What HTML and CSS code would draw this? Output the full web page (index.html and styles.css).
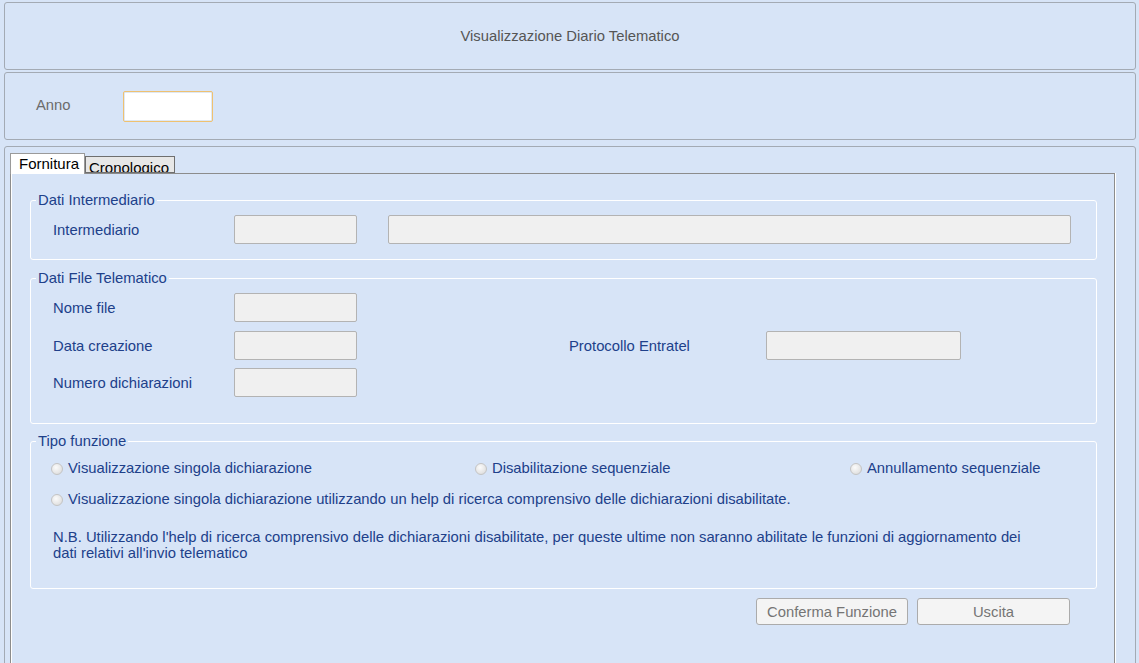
FILE: index.html
```html
<!DOCTYPE html>
<html lang="it">
<head>
<meta charset="utf-8">
<title>Visualizzazione Diario Telematico</title>
<link rel="stylesheet" href="styles.css">
</head>
<body>
<div class="page">
  <div class="panel header">
    <span class="title">Visualizzazione Diario Telematico</span>
  </div>
  <div class="panel filter">
    <label class="anno-label" for="anno">Anno</label>
    <div class="anno-box"><input id="anno" class="anno-input" type="text"></div>
  </div>
  <div class="panel main">
    <div class="tabs">
      <div class="tab active">Fornitura</div>
      <div class="tab inactive">Cronologico</div>
    </div>
    <div class="tab-panel">
      <fieldset class="group">
        <legend>Dati Intermediario</legend>
        <div class="group-body g1">
          <div class="row">
            <span class="lbl">Intermediario</span>
            <input class="field w-code" type="text" disabled>
            <input class="field w-name" type="text" disabled>
          </div>
        </div>
      </fieldset>

      <fieldset class="group">
        <legend>Dati File Telematico</legend>
        <div class="group-body g2">
          <div class="row">
            <span class="lbl">Nome file</span>
            <input class="field w-code" type="text" disabled>
          </div>
          <div class="row row-2">
            <span class="lbl">Data creazione</span>
            <input class="field w-code" type="text" disabled>
            <span class="lbl lbl-right">Protocollo Entratel</span>
            <input class="field w-prot" type="text" disabled>
          </div>
          <div class="row row-3">
            <span class="lbl">Numero dichiarazioni</span>
            <input class="field w-code" type="text" disabled>
          </div>
        </div>
      </fieldset>

      <fieldset class="group">
        <legend>Tipo funzione</legend>
        <div class="group-body g3">
          <div class="radio-grid">
            <span class="opt"><span class="radio"></span>Visualizzazione singola dichiarazione</span>
            <span class="opt"><span class="radio"></span>Disabilitazione sequenziale</span>
            <span class="opt"><span class="radio"></span>Annullamento sequenziale</span>
          </div>
          <div class="radio-single">
            <span class="opt"><span class="radio"></span>Visualizzazione singola dichiarazione utilizzando un help di ricerca comprensivo delle dichiarazioni disabilitate.</span>
          </div>
          <p class="note">N.B. Utilizzando l'help di ricerca comprensivo delle dichiarazioni disabilitate, per queste ultime non saranno abilitate le funzioni di aggiornamento dei dati relativi all'invio telematico</p>
        </div>
      </fieldset>

      <div class="actions">
        <button class="btn btn-confirm" type="button">Conferma Funzione</button>
        <button class="btn btn-exit" type="button">Uscita</button>
      </div>
    </div>
  </div>
</div>
</body>
</html>
```
FILE: styles.css
```css
html, body {
  margin: 0;
  padding: 0;
  height: 100%;
  overflow: hidden;
}

body {
  background: #d7e4f7;
  font-family: "Liberation Sans", Arial, sans-serif;
  font-size: 14.8px;
  line-height: 16px;
}

.page {
  display: flex;
  flex-direction: column;
  padding: 2px 0 0 4px;
  width: 1132px;
}

.panel {
  box-sizing: border-box;
  width: 1132px;
  border: 1px solid #a3aab4;
  border-radius: 3px;
}

.header {
  height: 68px;
  display: flex;
  align-items: center;
  justify-content: center;
}

.title {
  color: #555;
}

.filter {
  margin-top: 2px;
  height: 68px;
  display: flex;
  align-items: flex-start;
  padding: 18px 0 0 31px;
}

.anno-label {
  width: 87px;
  margin-top: 6px;
  color: #6b6b6b;
}

.anno-box {
  box-sizing: border-box;
  width: 90px;
  height: 31px;
  padding: 1px;
  border: 1px solid #efc170;
  border-radius: 2px;
  background: #dfe8f3;
}

.anno-input {
  display: block;
  box-sizing: border-box;
  width: 100%;
  height: 100%;
  margin: 0;
  padding: 0 3px;
  border: none;
  background: #fff;
  outline: none;
}

.main {
  margin-top: 6px;
  height: 560px;
  padding: 6px 0 0 5px;
}

.tabs {
  display: flex;
  align-items: flex-end;
  height: 20px;
}

.tab {
  box-sizing: border-box;
  font-size: 15px;
  color: #000;
  overflow: hidden;
  white-space: nowrap;
}

.tab.active {
  position: relative;
  z-index: 1;
  width: 75px;
  height: 21px;
  margin-bottom: -1px;
  padding: 2px 0 0 8px;
  line-height: 16px;
  background: #fff;
  border: 1px solid #9a9a9a;
  border-bottom: none;
}

.tab.inactive {
  width: 90px;
  height: 17px;
  padding: 2px 0 0 3px;
  line-height: 17px;
  background: #e7e7e7;
  border: 1px solid #6f6f6f;
}

.tab-panel {
  box-sizing: border-box;
  width: 1105px;
  height: 520px;
  border: 1px solid #8c8c8c;
  border-bottom: none;
  box-shadow: 1px 0 0 #fff, inset 1px 0 0 #fff;
  padding: 18px 17px 0 19px;
}

.group {
  margin: 0;
  padding: 0;
  min-width: 0;
  border: 1px solid #fff;
  border-radius: 3px;
}

.group + .group {
  margin-top: 10px;
}

.group:last-of-type {
  margin-top: 9px;
}

.group legend {
  margin-left: 5px;
  padding: 0 2px;
  color: #20408a;
  line-height: 16px;
}

.group-body {
  padding-left: 22px;
}

.g1 {
  padding-top: 7px;
  padding-bottom: 15px;
}

.g2 {
  padding-top: 7px;
  padding-bottom: 26px;
  display: flex;
  flex-direction: column;
}

.row-2 {
  margin-top: 9px;
}

.row-3 {
  margin-top: 8px;
}

.g3 {
  padding: 11px 0 27px 20px;
}

.row {
  display: flex;
  align-items: center;
}

.lbl {
  width: 181px;
  color: #20408a;
  white-space: nowrap;
}

.lbl-right {
  width: 197px;
  margin-left: 212px;
}

.field {
  box-sizing: border-box;
  height: 29px;
  margin: 0;
  border: 1px solid #b3b3b3;
  border-radius: 2px;
  background: #f0f0f0;
}

.w-code {
  width: 123px;
}

.w-name {
  width: 683px;
  margin-left: 31px;
}

.w-prot {
  width: 195px;
}

.radio-grid {
  display: grid;
  grid-template-columns: 424px 375px auto;
}

.opt {
  display: flex;
  align-items: center;
  color: #20408a;
  white-space: nowrap;
}

.radio {
  box-sizing: border-box;
  width: 12px;
  height: 12px;
  margin: 1px 5px 0 0;
  border: 1px solid #c4c4c4;
  border-radius: 50%;
  background: radial-gradient(circle at 40% 35%, #fbfbfb 0%, #e6e6e6 60%, #d4d4d4 100%);
  flex: none;
}

.radio-single {
  margin-top: 15px;
}

.note {
  margin: 22px 0 0 2px;
  width: 990px;
  color: #20408a;
}

.actions {
  display: flex;
  justify-content: flex-end;
  gap: 9px;
  margin-top: 9px;
  padding-right: 27px;
}

.btn {
  box-sizing: border-box;
  height: 27px;
  margin: 0;
  padding: 0;
  border: 1px solid #ababab;
  border-radius: 3px;
  background: #f4f4f4;
  color: #757575;
  font-family: "Liberation Sans", Arial, sans-serif;
  font-size: 14.8px;
}

.btn-confirm {
  width: 152px;
}

.btn-exit {
  width: 153px;
}
```
